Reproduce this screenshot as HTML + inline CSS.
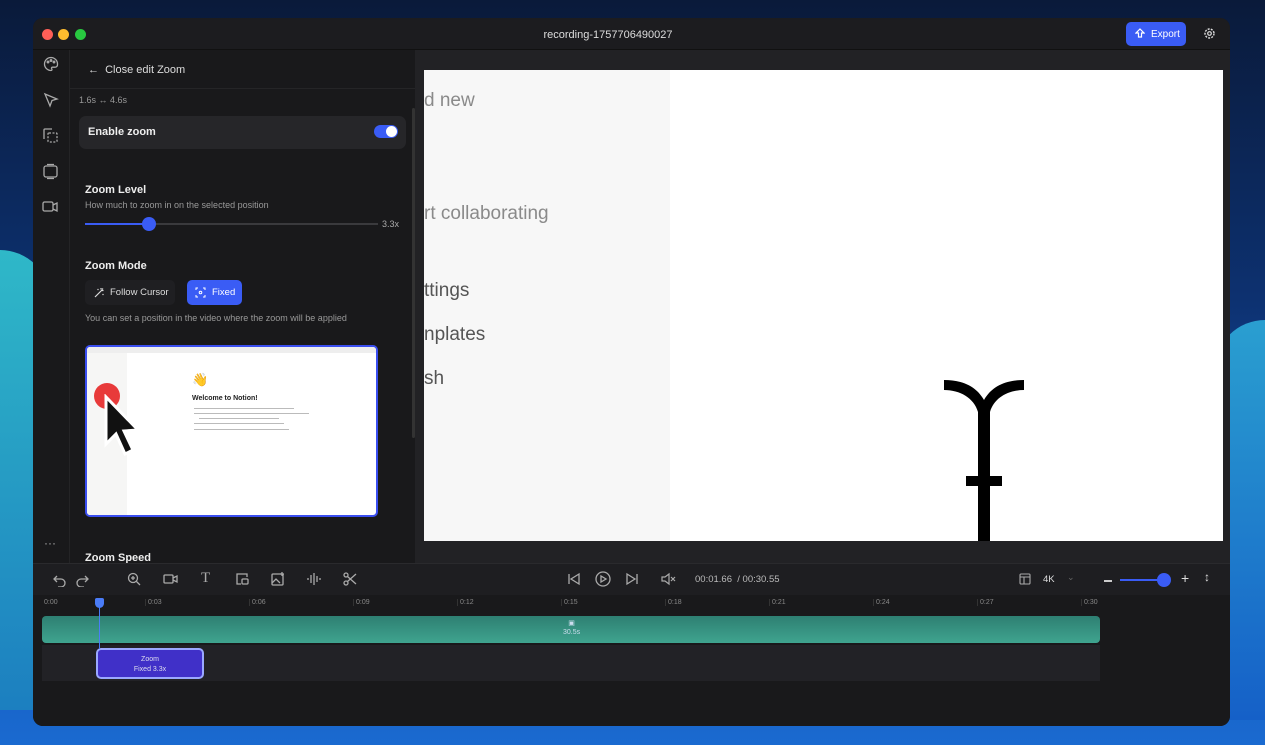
<!DOCTYPE html>
<html><head><meta charset="utf-8"><style>
*{margin:0;padding:0;box-sizing:border-box}
body{width:1265px;height:745px;overflow:hidden;position:relative;font-family:"Liberation Sans",sans-serif;
background:linear-gradient(180deg,#0a1a3a 0%,#0d3170 40%,#1456b8 75%,#1a6ad0 100%);}
.bgl{position:absolute;left:0;top:250px;width:50px;height:460px;background:linear-gradient(180deg,#2fb8c8,#1c7fc0);border-radius:0 50px 0 0}
.bgr{position:absolute;right:0;top:320px;width:50px;height:400px;background:linear-gradient(180deg,#2a9fd0,#1560c8);border-radius:50px 0 0 0}
.win{position:absolute;left:33px;top:18px;width:1197px;height:708px;background:#1a1a1d;border-radius:10px;overflow:hidden}
.title{position:absolute;left:0;top:0;width:100%;height:32px;background:#1c1c1f;border-bottom:1px solid #111}
.dot{position:absolute;top:11px;width:11px;height:11px;border-radius:50%}
.t{position:absolute;color:#e8e8e8;white-space:nowrap}
.side{position:absolute;left:0;top:32px;width:37px;height:513px;background:#19191b;border-right:1px solid #242426}
.panel{position:absolute;left:37px;top:32px;width:345px;height:513px;background:#19191b;overflow:hidden}
.prev{position:absolute;left:382px;top:32px;width:815px;height:513px;background:#222225}
.video{position:absolute;left:391px;top:52px;width:799px;height:471px;background:#fff;overflow:hidden}
.tb{position:absolute;left:0;top:545px;width:100%;height:32px;background:#1e1e21;border-top:1px solid #2a2a2d}
.tl{position:absolute;left:0;top:577px;width:100%;height:131px;background:#19191b}
svg{position:absolute}
</style></head><body>
<div class="bgl"></div><div class="bgr"></div>
<div class="win">
 <div class="title">
  <div class="dot" style="left:9px;background:#fe5f57"></div>
  <div class="dot" style="left:25px;background:#febc2e"></div>
  <div class="dot" style="left:42px;background:#28c840"></div>
  <div class="t" style="left:0;width:1150px;text-align:center;top:11px;font-size:11px;color:#ddd">recording-1757706490027</div>
  <div style="position:absolute;left:1093px;top:4px;width:60px;height:24px;background:#3a5cf5;border-radius:5px"></div>
  <div class="t" style="left:1118px;top:11px;font-size:10px;color:#fff">Export</div>
  <svg style="left:1102px;top:10px" width="10" height="11" viewBox="0 0 10 11"><path d="M5 1L9 5H6.5V9H3.5V5H1Z" fill="none" stroke="#fff" stroke-width="1.2"/></svg>
  <svg style="left:1170px;top:9px" width="13" height="13" viewBox="0 0 13 13"><circle cx="6.5" cy="6.5" r="4.5" fill="none" stroke="#ddd" stroke-width="1.4" stroke-dasharray="2 1.2"/><circle cx="6.5" cy="6.5" r="1.8" fill="none" stroke="#ddd" stroke-width="1.2"/></svg>
 </div>
 <div class="side">
  <svg style="left:10px;top:6px" width="16" height="16" viewBox="0 0 16 16" fill="none" stroke="#aaa" stroke-width="1.3"><path d="M8 1.5a6.5 6.5 0 1 0 0 13c1 0 1.2-1 .7-1.7s-.2-1.6.8-1.6H12a2.5 2.5 0 0 0 2.5-2.7A6.6 6.6 0 0 0 8 1.5z"/><circle cx="5" cy="6" r=".8"/><circle cx="8" cy="4.5" r=".8"/><circle cx="11" cy="6" r=".8"/></svg>
  <svg style="left:10px;top:42px" width="16" height="16" viewBox="0 0 16 16" fill="none" stroke="#aaa" stroke-width="1.3"><path d="M2 2l12 5-5 1.5L7 14z"/></svg>
  <svg style="left:9px;top:77px" width="17" height="17" viewBox="0 0 17 17" fill="none" stroke="#aaa" stroke-width="1.3"><path d="M10 2H3a1 1 0 0 0-1 1v7"/><path d="M2 10v2"/><rect x="6" y="6" width="9" height="9" rx="1" stroke-dasharray="2 1.5"/></svg>
  <svg style="left:9px;top:113px" width="17" height="17" viewBox="0 0 17 17" fill="none" stroke="#aaa" stroke-width="1.3"><rect x="2" y="3" width="13" height="11" rx="2"/><path d="M5 1.5h7M5 15.5h7"/></svg>
  <svg style="left:9px;top:150px" width="17" height="14" viewBox="0 0 17 14" fill="none" stroke="#aaa" stroke-width="1.3"><rect x="1" y="2" width="10" height="9" rx="1.5"/><path d="M11 5l4-2v8l-4-2"/></svg>
  <div class="t" style="left:11px;top:486px;font-size:12px;color:#aaa">···</div>
 </div>
 <div class="panel">
  <div class="t" style="left:18px;top:14px;font-size:11px;color:#ddd">←&nbsp; Close edit Zoom</div>
  <div style="position:absolute;left:0;top:38px;width:345px;border-top:1px solid #252527"></div>
  <div class="t" style="left:9px;top:45px;font-size:9px;color:#999">1.6s ↔ 4.6s</div>
  <div style="position:absolute;left:9px;top:66px;width:327px;height:33px;background:#262629;border-radius:7px"></div>
  <div class="t" style="left:18px;top:76px;font-size:11px;font-weight:bold;color:#eee">Enable zoom</div>
  <div style="position:absolute;left:304px;top:75px;width:24px;height:13px;background:#3a5cf5;border-radius:7px"></div>
  <div style="position:absolute;left:316px;top:76px;width:11px;height:11px;background:#fff;border-radius:50%"></div>
  <div style="position:absolute;left:342px;top:58px;width:3px;height:330px;background:#333;border-radius:2px"></div>
  <div class="t" style="left:15px;top:134px;font-size:11px;font-weight:bold;color:#eee">Zoom Level</div>
  <div class="t" style="left:15px;top:150px;font-size:9px;color:#999">How much to zoom in on the selected position</div>
  <div style="position:absolute;left:15px;top:173px;width:293px;height:2px;background:#3a3a3d"></div>
  <div style="position:absolute;left:15px;top:173px;width:64px;height:2px;background:#3a5cf5"></div>
  <div style="position:absolute;left:72px;top:167px;width:14px;height:14px;background:#3a5cf5;border-radius:50%"></div>
  <div class="t" style="left:312px;top:169px;font-size:9px;color:#aaa">3.3x</div>
  <div class="t" style="left:15px;top:210px;font-size:11px;font-weight:bold;color:#eee">Zoom Mode</div>
  <div style="position:absolute;left:15px;top:230px;width:90px;height:25px;background:#1f1f22;border-radius:5px"></div>
  <svg style="left:24px;top:237px" width="11" height="11" viewBox="0 0 11 11" fill="none" stroke="#ddd" stroke-width="1.2"><path d="M1 10L8 3M7 1v1.5M9.5 3.5H8M9 1.5L8 2.5M4 2v1M3.5 2.5h1M9 7v1M8.5 7.5h1"/></svg>
  <div class="t" style="left:40px;top:237px;font-size:9.5px;color:#ddd">Follow Cursor</div>
  <div style="position:absolute;left:117px;top:230px;width:55px;height:25px;background:#3a5cf5;border-radius:5px"></div>
  <div class="t" style="left:142px;top:237px;font-size:9.5px;color:#fff">Fixed</div>
  <svg style="left:125px;top:237px" width="11" height="11" viewBox="0 0 11 11" fill="none" stroke="#fff" stroke-width="1"><path d="M1 3V1h2M8 1h2v2M10 8v2H8M3 10H1V8"/><circle cx="5.5" cy="5.5" r="1.3"/></svg>
  <div class="t" style="left:15px;top:263px;font-size:9px;color:#999">You can set a position in the video where the zoom will be applied</div>
  <div style="position:absolute;left:15px;top:295px;width:293px;height:172px;border:2px solid #3a4ef0;border-radius:5px;background:#fff;overflow:hidden">
   <div style="position:absolute;left:0;top:0;width:40px;height:170px;background:#f6f6f5"></div>
   <div style="position:absolute;left:0;top:0;width:291px;height:6px;background:#eee"></div>
   <div class="t" style="left:105px;top:25px;font-size:13px">👋</div>
   <div class="t" style="left:105px;top:48px;font-size:7px;font-weight:bold;color:#222">Welcome to Notion!</div>
   <div style="position:absolute;left:107px;top:61px;width:100px;height:1px;background:#bbb"></div>
   <div style="position:absolute;left:107px;top:66px;width:115px;height:1px;background:#bbb"></div>
   <div style="position:absolute;left:112px;top:71px;width:80px;height:1px;background:#bbb"></div>
   <div style="position:absolute;left:107px;top:76px;width:90px;height:1px;background:#bbb"></div>
   <div style="position:absolute;left:107px;top:82px;width:95px;height:1px;background:#bbb"></div>
   <div style="position:absolute;left:7px;top:36px;width:26px;height:26px;background:#e83a3a;border-radius:50%"></div>
   <svg style="left:16px;top:47px" width="40" height="70" viewBox="0 0 40 70"><path d="M3 3L3 50L13 40L22 60L30 56L21 37L35 36Z" fill="#111" stroke="#fff" stroke-width="3"/></svg>
  </div>
  <div class="t" style="left:15px;top:502px;font-size:11px;font-weight:bold;color:#eee">Zoom Speed</div>
 </div>
 <div class="prev">
  <div class="video" style="left:9px;top:20px">
   <div style="position:absolute;left:0;top:0;width:246px;height:471px;background:#f7f7f7"></div>
   <div class="t" style="left:0;top:20px;font-size:19px;color:#8a8a8a">d new</div>
   <div class="t" style="left:0;top:133px;font-size:19px;color:#8a8a8a">rt collaborating</div>
   <div class="t" style="left:0;top:210px;font-size:19px;color:#555">ttings</div>
   <div class="t" style="left:0;top:254px;font-size:19px;color:#555">nplates</div>
   <div class="t" style="left:0;top:298px;font-size:19px;color:#555">sh</div>
   <svg style="left:518px;top:306px" width="84" height="166" viewBox="0 0 84 166"><path d="M2 4C20 4 34 10 42 24C50 10 64 4 82 4V14C66 14 52 22 48 36V100H60V110H48V166H36V110H24V100H36V36C32 22 18 14 2 14Z" fill="#000"/></svg>
  </div>
 </div>
 <div class="tb">
  <svg style="left:20px;top:9px" width="36" height="14" viewBox="0 0 36 14" fill="none" stroke="#aaa" stroke-width="1.3"><path d="M4 3L1 6l3 3M1 6h7a4 4 0 0 1 0 8H5"/><path d="M32 3l3 3-3 3M35 6h-7a4 4 0 0 0 0 8h3"/></svg>
  <svg style="left:94px;top:8px" width="14" height="14" viewBox="0 0 14 14" fill="none" stroke="#aaa" stroke-width="1.3"><circle cx="6" cy="6" r="4.5"/><path d="M9.5 9.5L13 13M6 4v4M4 6h4"/></svg>
  <svg style="left:130px;top:9px" width="15" height="12" viewBox="0 0 15 12" fill="none" stroke="#aaa" stroke-width="1.3"><rect x="1" y="2" width="9" height="8" rx="1"/><path d="M10 5l4-2v6l-4-2"/></svg>
  <div class="t" style="left:168px;top:6px;font-size:15px;color:#aaa;font-family:'Liberation Serif',serif">T</div>
  <svg style="left:202px;top:8px" width="14" height="14" viewBox="0 0 14 14" fill="none" stroke="#aaa" stroke-width="1.3"><path d="M12 5V2H2v10h4"/><rect x="7" y="7" width="6" height="5" rx="1"/></svg>
  <svg style="left:238px;top:7px" width="15" height="15" viewBox="0 0 15 15" fill="none" stroke="#aaa" stroke-width="1.3"><rect x="1" y="3" width="11" height="11" rx="1"/><path d="M1 12l4-4 4 4M11 1v4M9 3h4"/></svg>
  <svg style="left:274px;top:8px" width="14" height="14" viewBox="0 0 14 14" stroke="#aaa" stroke-width="1.3"><path d="M1 6v2M4 3v8M7 1v12M10 4v6M13 6v2"/></svg>
  <svg style="left:310px;top:8px" width="14" height="14" viewBox="0 0 14 14" fill="none" stroke="#aaa" stroke-width="1.3"><circle cx="3" cy="3" r="2"/><circle cx="3" cy="11" r="2"/><path d="M4.5 4.5L13 12M4.5 9.5L13 2"/></svg>
  <svg style="left:534px;top:8px" width="14" height="14" viewBox="0 0 14 14" fill="none" stroke="#aaa" stroke-width="1.3"><path d="M2 2v10M12 2L4 7l8 5z"/></svg>
  <svg style="left:562px;top:7px" width="16" height="16" viewBox="0 0 16 16" fill="none" stroke="#aaa" stroke-width="1.3"><circle cx="8" cy="8" r="7"/><path d="M6 5v6l5-3z"/></svg>
  <svg style="left:592px;top:8px" width="14" height="14" viewBox="0 0 14 14" fill="none" stroke="#aaa" stroke-width="1.3"><path d="M12 2v10M2 2l8 5-8 5z"/></svg>
  <svg style="left:628px;top:8px" width="15" height="14" viewBox="0 0 15 14" fill="none" stroke="#aaa" stroke-width="1.2"><path d="M1 5h3l4-3v10l-4-3H1zM10 5l4 4M14 5l-4 4"/></svg>
  <div class="t" style="left:662px;top:10px;font-size:9.5px;color:#bbb">00:01.66 &nbsp;/ 00:30.55</div>
  <svg style="left:986px;top:9px" width="12" height="12" viewBox="0 0 12 12" fill="none" stroke="#aaa" stroke-width="1.1"><rect x="1" y="1" width="10" height="10" rx="1"/><path d="M1 4h10M5 4v7"/></svg>
  <div class="t" style="left:1010px;top:10px;font-size:9.5px;color:#ddd">4K</div>
  <div class="t" style="left:1034px;top:8px;font-size:9px;color:#666">⌄</div>
  <div style="position:absolute;left:1071px;top:16px;width:8px;height:1.5px;background:#ccc"></div>
  <div style="position:absolute;left:1087px;top:15px;width:44px;height:2px;background:#3a5cf5"></div>
  <div style="position:absolute;left:1124px;top:9px;width:14px;height:14px;background:#3a5cf5;border-radius:50%"></div>
  <div class="t" style="left:1148px;top:6px;font-size:14px;color:#ddd">+</div>
  <div class="t" style="left:1171px;top:6px;font-size:12px;color:#ddd">↕</div>
 </div>
 <div class="tl">
  <div style="position:absolute;left:9px;top:0;width:1060px;height:15px;font-size:7px;color:#888">
   <span style="position:absolute;left:2px;top:4px">0:00</span>
   <span style="position:absolute;left:103px;top:4px;border-left:1px solid #333;padding-left:2px">0:03</span>
   <span style="position:absolute;left:207px;top:4px;border-left:1px solid #333;padding-left:2px">0:06</span>
   <span style="position:absolute;left:311px;top:4px;border-left:1px solid #333;padding-left:2px">0:09</span>
   <span style="position:absolute;left:415px;top:4px;border-left:1px solid #333;padding-left:2px">0:12</span>
   <span style="position:absolute;left:519px;top:4px;border-left:1px solid #333;padding-left:2px">0:15</span>
   <span style="position:absolute;left:623px;top:4px;border-left:1px solid #333;padding-left:2px">0:18</span>
   <span style="position:absolute;left:727px;top:4px;border-left:1px solid #333;padding-left:2px">0:21</span>
   <span style="position:absolute;left:831px;top:4px;border-left:1px solid #333;padding-left:2px">0:24</span>
   <span style="position:absolute;left:935px;top:4px;border-left:1px solid #333;padding-left:2px">0:27</span>
   <span style="position:absolute;left:1039px;top:4px;border-left:1px solid #333;padding-left:2px">0:30</span>
  </div>
  <div style="position:absolute;left:9px;top:21px;width:1058px;height:27px;background:linear-gradient(180deg,#2e7f72,#3fa48f);border-radius:4px"></div>
  <div class="t" style="left:530px;top:24px;font-size:7px;color:#cde;text-align:center;line-height:9px">▣<br>30.5s</div>
  <div style="position:absolute;left:9px;top:50px;width:1058px;height:36px;background:#222226"></div>
  <div style="position:absolute;left:63px;top:53px;width:108px;height:31px;background:#4030c8;border:2px solid #9aa8ff;border-radius:5px"></div>
  <div class="t" style="left:63px;top:60px;width:108px;text-align:center;font-size:7px;color:#dde;line-height:10px">Zoom<br>Fixed 3.3x</div>
  <div style="position:absolute;left:66px;top:8px;width:1px;height:46px;background:#4a7cf7"></div>
  <div style="position:absolute;left:62px;top:3px;width:9px;height:10px;background:#4a7cf7;border-radius:2px 2px 5px 5px"></div>
 </div>
</div>
</body></html>
